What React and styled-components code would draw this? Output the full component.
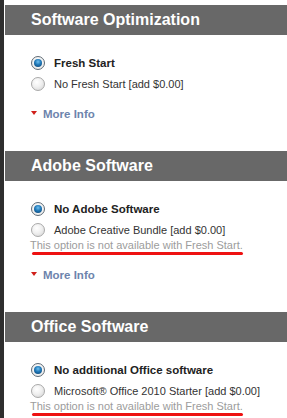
import React from "react";
import styled, { createGlobalStyle } from "styled-components";

const Global = createGlobalStyle`
  html, body { margin: 0; padding: 0; background: #fff; }
  body { font-family: "Liberation Sans", Arial, sans-serif; }
`;

const Page = styled.div`
  min-height: 100vh;
  box-sizing: border-box;
  border-left: 4px solid #2e2e2e;
  padding: 5px 0 0 1px;
  overflow: hidden;
`;

const Section = styled.section`
  padding-bottom: 30px;
`;

const Header = styled.h2`
  margin: 0;
  height: 30px;
  line-height: 30px;
  background: #686868;
  color: #fff;
  font-size: 16px;
  font-weight: bold;
  padding-left: 26px;
`;

const Body = styled.div`
  padding: 17px 0 0 26px;
`;

const Row = styled.label`
  display: flex;
  align-items: center;
  height: 21px;
  gap: 9px;
  color: ${(p) => (p.$bold ? "#222" : "#333")};
  font-size: ${(p) => (p.$bold ? "11.5px" : "11px")};
  font-weight: ${(p) => (p.$bold ? "bold" : "normal")};
`;

const Radio = styled.span`
  position: relative;
  flex: none;
  width: 14px;
  height: 14px;
  box-sizing: border-box;
  border-radius: 50%;
  border: 1px solid ${(p) => (p.$checked ? "#5e6a74" : "#a9a9a9")};
  background: ${(p) =>
    p.$checked
      ? "radial-gradient(circle at 50% 40%, #ffffff 0%, #e6e6e6 100%)"
      : "radial-gradient(circle at 40% 35%, #ffffff 0%, #f0f0f0 45%, #d2d2d2 100%)"};
  &::after {
    content: "";
    display: ${(p) => (p.$checked ? "block" : "none")};
    position: absolute;
    left: 2px;
    top: 2px;
    width: 8px;
    height: 8px;
    border-radius: 50%;
    background: radial-gradient(circle at 50% 35%, #6fc0f0 0%, #1f78b8 45%, #0c3f6c 100%);
  }
`;

const Note = styled.div`
  margin-top: -1px;
  margin-left: -1px;
  line-height: 12px;
  font-size: 11px;
  color: #9c9c9c;
`;

const Mark = styled.div`
  margin: 1px 0 0 1px;
  width: 211px;
  height: 3px;
  border-radius: 2px;
  background: #ee1111;
`;

const MoreInfo = styled.a`
  display: flex;
  align-items: center;
  height: 14px;
  margin-top: 13px;
  gap: 6px;
  color: #6d84ad;
  font-size: 11.5px;
  font-weight: bold;
  text-decoration: none;
`;

const Arrow = styled.span`
  width: 0;
  height: 0;
  margin-top: -3px;
  border-left: 3px solid transparent;
  border-right: 3px solid transparent;
  border-top: 4px solid #d0201a;
`;

const sections = [
  {
    title: "Software Optimization",
    options: ["Fresh Start", "No Fresh Start [add $0.00]"],
    note: false,
    more: true,
  },
  {
    title: "Adobe Software",
    options: ["No Adobe Software", "Adobe Creative Bundle [add $0.00]"],
    note: true,
    more: true,
  },
  {
    title: "Office Software",
    options: ["No additional Office software", "Microsoft® Office 2010 Starter [add $0.00]"],
    note: true,
    more: false,
  },
];

export default function App() {
  return (
    <>
      <Global />
      <Page>
        {sections.map((s) => (
          <Section key={s.title}>
            <Header>{s.title}</Header>
            <Body>
              {s.options.map((o, i) => (
                <Row key={o} $bold={i === 0}>
                  <Radio $checked={i === 0} />
                  {o}
                </Row>
              ))}
              {s.note && (
                <>
                  <Note>This option is not available with Fresh Start.</Note>
                  <Mark />
                </>
              )}
              {s.more && (
                <MoreInfo href="#">
                  <Arrow />
                  More Info
                </MoreInfo>
              )}
            </Body>
          </Section>
        ))}
      </Page>
    </>
  );
}
